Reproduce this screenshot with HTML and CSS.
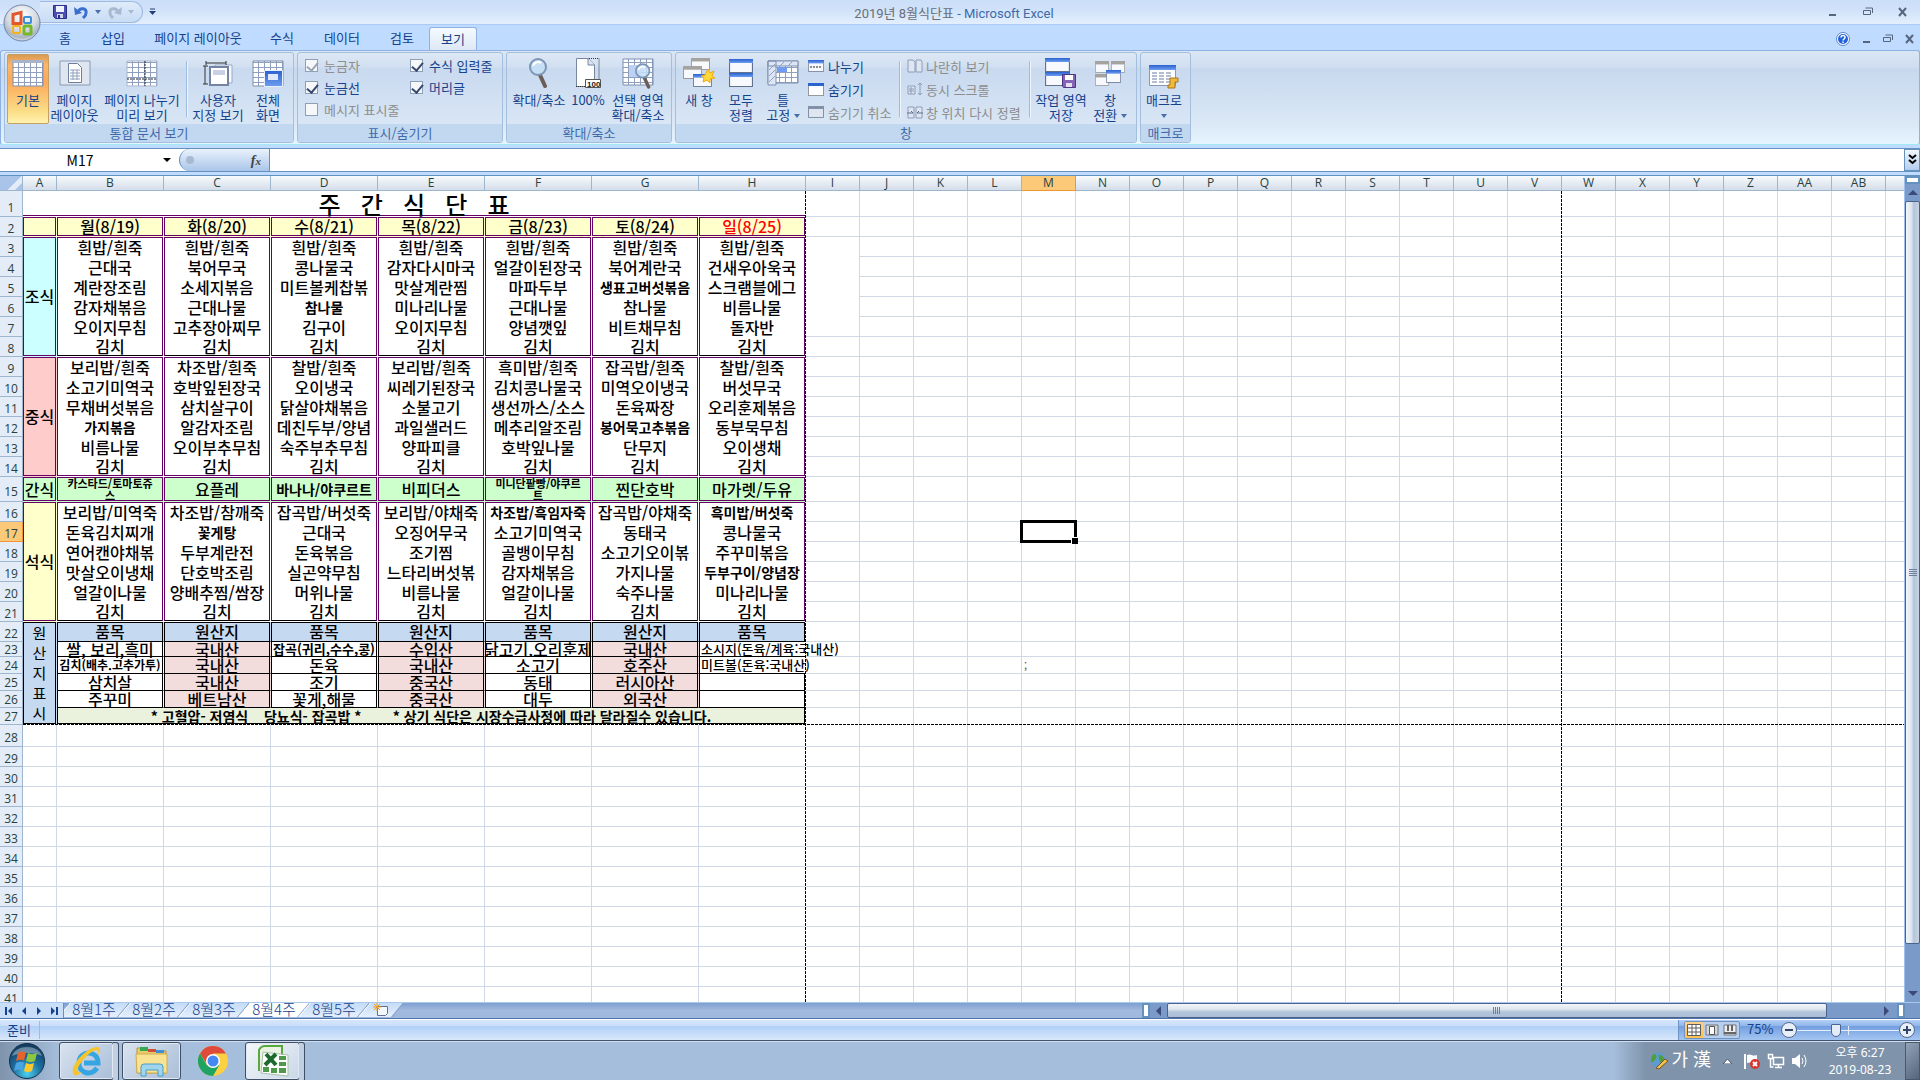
FILE: index.html
```html
<!DOCTYPE html>
<html lang="ko">
<head>
<meta charset="utf-8">
<title>2019년 8월식단표 - Microsoft Excel</title>
<link rel="stylesheet" href="styles.css">
</head>
<body>
<header class="titlebar">
  <button class="office" aria-label="Office 단추">
    <svg width="38" height="38" viewBox="0 0 38 38">
      <defs><radialGradient id="orb" cx=".5" cy=".3" r=".75"><stop offset="0" stop-color="#fff"/><stop offset=".55" stop-color="#d5dae2"/><stop offset=".8" stop-color="#a9b4c4"/><stop offset="1" stop-color="#f4f7fa"/></radialGradient></defs>
      <circle cx="19" cy="19" r="18" fill="url(#orb)" stroke="#6f86a6"/>
      <g fill="none" stroke-width="3">
        <path d="M18 8.500l-8 2v9h8z" stroke="#e4572a"/>
        <rect x="21" y="13" width="7" height="6" rx="1" stroke="#3d8fd6" stroke-width="2"/>
        <rect x="10" y="22" width="7" height="7" rx="1" stroke="#f5b31a" stroke-width="2"/>
        <rect x="21" y="22" width="7" height="8" rx="1" stroke="#75b82a"/>
      </g>
    </svg>
  </button>
  <div class="side">
    <div class="qat">
      <button aria-label="저장"><svg width="14" height="14"><path d="M.5.5h13v13h-11l-2-2z" fill="#4b4fb0" stroke="#28308a"/><path d="M3 1h8v6H3z" fill="#eef3ff"/><path d="M4 9h6v4H4z" fill="#cfd6e8"/><path d="M5 10h2v3H5z" fill="#28308a"/></svg></button>
      <button aria-label="실행 취소"><svg width="15" height="14"><path d="M4 7C6 2 13 3 12 8c0 3-2 4-3 5" fill="none" stroke="#3a6fd0" stroke-width="3"/><path d="M0 2l1 8 7-2z" fill="#3a6fd0"/></svg></button>
      <i class="caret"></i>
      <button aria-label="다시 실행"><svg width="15" height="14"><path d="M11 7C9 2 2 3 3 8c0 3 2 4 3 5" fill="none" stroke="#a9b9d0" stroke-width="3"/><path d="M15 2l-1 8-7-2z" fill="#a9b9d0"/></svg></button>
      <i class="caret dim"></i>
    </div>
    <svg class="qatmore" width="7" height="8"><path d="M1 1h5" stroke="#223f74"/><path d="M0 3h7l-3.500 4z" fill="#223f74"/></svg>
  </div>
  <h1><span>2019년 8월식단표</span> - Microsoft Excel</h1>
  <div class="side wincontrols">
    <button aria-label="최소화"><svg width="10" height="10"><path d="M1 8h7" stroke="#56667e" stroke-width="2"/></svg></button>
    <button aria-label="이전 크기로"><svg width="10" height="10"><path d="M2.500 1h7v5" fill="none" stroke="#56667e"/><path d="M.5 3.500h7v4h-7z" fill="none" stroke="#56667e"/></svg></button>
    <button aria-label="닫기"><svg width="10" height="10"><path d="M1 1l7 8M8 1L1 9" stroke="#56667e" stroke-width="2"/></svg></button>
  </div>
</header>

<nav class="tabs">
  <a href="#" class="t1">홈</a><a href="#" class="t2">삽입</a><a href="#" class="t3">페이지 레이아웃</a><a href="#" class="t4">수식</a><a href="#" class="t5">데이터</a><a href="#" class="t4">검토</a><a href="#" class="on">보기</a>
  <div class="doccontrols">
    <button aria-label="도움말"><svg width="14" height="14"><circle cx="7" cy="7" r="6.500" fill="#fff" stroke="#5b86c9"/><circle cx="7" cy="7" r="5" fill="#2060d8"/><path d="M5 5.500c0-3 4.500-2.500 4 0C9 7 7 7 7 8.500M7 9.500v1.500" fill="none" stroke="#fff" stroke-width="1.500"/></svg></button>
    <button aria-label="창 최소화"><svg width="9" height="10"><path d="M1 8h7" stroke="#56667e" stroke-width="2"/></svg></button>
    <button aria-label="창 복원"><svg width="10" height="10"><path d="M2.500 1h7v5" fill="none" stroke="#56667e"/><path d="M.5 3.500h7v4h-7z" fill="none" stroke="#56667e"/></svg></button>
    <button aria-label="창 닫기"><svg width="10" height="10"><path d="M1 1l7 8M8 1L1 9" stroke="#56667e" stroke-width="2"/></svg></button>
  </div>
</nav>

<svg width="0" height="0" class="defs">
  <defs>
    <pattern id="gp" width="6" height="5" patternUnits="userSpaceOnUse"><path d="M0 0h6v5H0z" fill="#fff"/><path d="M0 .5h6M.5 0v5" stroke="#8f9fbd"/></pattern>
    <linearGradient id="bl" x2="0" y2="1"><stop offset="0" stop-color="#2a62cf"/><stop offset="1" stop-color="#6d9df0"/></linearGradient>
    <symbol id="win" viewBox="0 0 22 14" preserveAspectRatio="none"><path d="M.5.5h21v13H.5z" fill="#f7f9fd" stroke="#62718c"/><path d="M0 0h22v4H0z" fill="url(#bl)"/></symbol>
    <symbol id="gwin" viewBox="0 0 22 14" preserveAspectRatio="none"><path d="M.5.5h21v13H.5z" fill="#f7f9fd" stroke="#8b8b90"/><path d="M0 0h22v4H0z" fill="#a5a3a0"/></symbol>
    <symbol id="lens" viewBox="0 0 20 30"><path d="M11 17l5 11" stroke="#6b5e59" stroke-width="4" stroke-linecap="round"/><circle cx="9" cy="9" r="8" fill="#c3def6" fill-opacity=".85" stroke="#7c95b5" stroke-width="2"/><path d="M4 8c1-4 6-5 8-3" stroke="#fff" stroke-width="2" fill="none"/></symbol>
  </defs>
</svg>

<section class="ribbon">
  <div class="group g1">
    <div class="body">
      <button class="big active w42"><svg width="32" height="32"><path d="M1 4h30v25H1z" fill="url(#gp)" stroke="#7f8fae"/><path d="M0 3h32v3H0z" fill="#a8b4cb"/></svg><span>기본</span></button>
      <button class="big w50"><svg width="32" height="32"><path d="M1 4h30v24H1z" fill="#dfe6f0" stroke="#8a9ab5"/><path d="M9.500 6.500h9l4 4v15h-13z" fill="#fff" stroke="#6e7f9d"/><path d="M11 13h10M11 16h10M11 19h10M11 22h10M14 13v10M18 13v10" stroke="#8f9fbd"/></svg><span>페이지<br>레이아웃</span></button>
      <button class="big w82"><svg width="32" height="32"><path d="M1 4h30v25H1z" fill="url(#gp)" stroke="#a9b5cc"/><path d="M19 4v25M1 22h30" stroke="#222" stroke-dasharray="2 1"/></svg><span>페이지 나누기<br>미리 보기</span></button>
      <i class="sep"></i>
      <button class="big w56"><svg width="32" height="32"><path d="M13 8h17v18H13z" fill="#f7f9fc" stroke="#9aa9c3"/><path d="M8 10h18v18H8z" fill="#fff" stroke="#7484a2" stroke-width="2"/><path d="M11 13h12v5H11z" fill="#c8d2e4"/><path d="M4 6h20M4 4v4M24 4v4M3 9v18M1 9h5M1 27h5" stroke="#333"/></svg><span>사용자<br>지정 보기</span></button>
      <button class="big w44"><svg width="32" height="32"><path d="M1 4h30v25H1z" fill="url(#gp)" stroke="#7f8fae"/><path d="M12.500 13.500h18v16h-18z" fill="url(#bl)" stroke="#e8effc"/><path d="M16 17h10v6H16z" fill="#dfe9fb"/></svg><span>전체<br>화면</span></button>
    </div>
    <h2>통합 문서 보기</h2>
  </div>
  <div class="group g2">
    <div class="body checks">
      <label class="off"><input type="checkbox" checked disabled>눈금자</label>
      <label><input type="checkbox" checked>수식 입력줄</label>
      <label><input type="checkbox" checked>눈금선</label>
      <label><input type="checkbox" checked>머리글</label>
      <label class="off"><input type="checkbox" disabled>메시지 표시줄</label>
    </div>
    <h2>표시/숨기기</h2>
  </div>
  <div class="group g3">
    <div class="body">
      <button class="big w56"><svg width="32" height="32"><use href="#lens" x="6" y="1" width="20" height="30"/></svg><span>확대/축소</span></button>
      <button class="big w42"><svg width="32" height="32"><path d="M4.500 1.500h12l6 6v22h-18z" fill="#fff" stroke="#7686a3"/><path d="M16 1v7h7" fill="#dbe3ef" stroke="#7686a3"/><path d="M17 1.500h10v28H4" fill="none" stroke="#333" stroke-dasharray="1 1"/><path d="M13.500 22.500h15v8h-15z" fill="#fff" stroke="#555"/><text x="15" y="30" font-size="8" font-weight="700" fill="#222">100</text></svg><span>100%</span></button>
      <button class="big w58"><svg width="32" height="32"><path d="M1 2h30v26H1z" fill="url(#gp)" stroke="#7f8fae"/><path d="M7 8h12v12H7z" fill="#bcd2f5"/><use href="#lens" x="13" y="6" width="17" height="26"/></svg><span>선택 영역<br>확대/축소</span></button>
    </div>
    <h2>확대/축소</h2>
  </div>
  <div class="group g4">
    <div class="body">
      <button class="big w42"><svg width="32" height="32"><use href="#gwin" x="8" y="1" width="19" height="12"/><use href="#gwin" x="0" y="9" width="19" height="13"/><use href="#win" x="10" y="17" width="19" height="13"/><path d="M25 12l2 4 4-2-2 5 3 2-5 1 0 4-3-3-4 2 1-4-3-2 4-1z" fill="#ffd83a" stroke="#f0a910"/></svg><span>새 창</span></button>
      <button class="big w42"><svg width="32" height="32"><use href="#win" x="4" y="2" width="24" height="14"/><use href="#win" x="4" y="16" width="24" height="14"/></svg><span>모두<br>정렬</span></button>
      <button class="big w42"><svg width="32" height="32"><path d="M1 4h30v22H1z" fill="url(#gp)" stroke="#7f8fae"/><path d="M1 4h8v24H1zM1 4h30v5H1z" fill="#dce6f6" stroke="#7f8fae"/><path d="M10 10h10v5H10z" fill="#6f9cf0"/><path d="M2 13l6-6M2 19l6-6M2 25l6-6M13 9l4-4M21 9l4-4" stroke="#8f9fbd"/></svg><span>틀<br>고정 <i class="caret"></i></span></button>
      <div class="stack w90">
        <button><svg width="16" height="16"><use href="#win" x="0" y="2" width="16" height="12"/><path d="M2 9h12" stroke="#222" stroke-dasharray="2 1"/></svg>나누기</button>
        <button><svg width="16" height="16"><path d="M.5 2.500h15v12H.5z" fill="#fff" stroke="#444" stroke-dasharray="1 1"/><path d="M0 2h16v3H0z" fill="#2a62cf"/></svg>숨기기</button>
        <button disabled><svg width="16" height="16"><path d="M.5 2.500h15v11H.5z" fill="#dfe6f2" stroke="#8290a8"/><path d="M0 2h16v3H0z" fill="#8290a8"/></svg>숨기기 취소</button>
      </div>
      <i class="sep"></i>
      <div class="stack w120">
        <button disabled><svg width="16" height="16"><path d="M1 2h5l2 2v10H1zM9 2h5l1 2v10H9z" fill="#dfe6f2" stroke="#8c9cb8"/></svg>나란히 보기</button>
        <button disabled><svg width="16" height="16"><path d="M1 5h7v8H1z" fill="#dfe6f2" stroke="#8c9cb8"/><path d="M2 8h5M2 10h5M4 6v7M13 2v12M11 4l2-2 2 2M11 12l2 2 2-2" stroke="#8c9cb8" fill="none"/></svg>동시 스크롤</button>
        <button disabled><svg width="16" height="16"><path d="M1 3h6v11H1zM9 3h6v11H9z" fill="#dfe6f2" stroke="#8c9cb8"/><path d="M0 9h6l-2-2M16 9h-6l2-2" stroke="#5f6f8c" fill="none"/></svg>창 위치 다시 정렬</button>
      </div>
      <i class="sep"></i>
      <button class="big w56"><svg width="32" height="32"><use href="#win" x="0" y="1" width="25" height="14"/><use href="#win" x="0" y="15" width="25" height="14"/><path d="M17.500 17.500h13v13h-12l-1-1z" fill="#8563b5" stroke="#4d3585"/><path d="M20 18h8v5h-8z" fill="#fff"/><path d="M21 26h6v4h-6z" fill="#e4e0ef"/></svg><span>작업 영역<br>저장</span></button>
      <button class="big w42"><svg width="32" height="32"><use href="#gwin" x="1" y="4" width="14" height="12"/><use href="#gwin" x="17" y="4" width="14" height="12"/><use href="#gwin" x="1" y="17" width="14" height="12"/><use href="#win" x="12" y="13" width="15" height="13"/></svg><span>창<br>전환 <i class="caret"></i></span></button>
    </div>
    <h2>창</h2>
  </div>
  <div class="group g5">
    <div class="body">
      <button class="big w42"><svg width="32" height="32"><path d="M1.500 8.500h26v20h-26z" fill="#fff" stroke="#8a9ab5"/><path d="M1 8h27v5H1z" fill="url(#bl)"/><path d="M4 16h20M4 19h20M4 22h20M4 25h20" stroke="#6b7f9f" stroke-dasharray="5 2"/><path d="M22 21h8v4h-3v6h-7v-3h2z" fill="#f0bb3c" stroke="#a8741a"/></svg><span>매크로<br><i class="caret"></i></span></button>
    </div>
    <h2>매크로</h2>
  </div>
</section>

<div class="formulabar">
  <input class="namebox" value="M17" aria-label="이름 상자">
  <i class="caret dark"></i>
  <div class="fx"><span></span><button aria-label="함수 삽입"><em>f<sub>x</sub></em></button></div>
  <input class="formula" value="" aria-label="수식 입력줄">
  <button class="expand" aria-label="수식 입력줄 확장"><svg width="9" height="12"><path d="M1 1l3.500 3L8 1M1 6l3.500 3L8 6" fill="none" stroke="#000" stroke-width="2"/></svg></button>
</div>

<main class="workbook">
  <div class="sheet">
    <table>
      <colgroup><col class="ch"><col class="ca"><col class="cm" span="7"><col class="cs" span="20"><col></colgroup>
      <thead><tr>
        <th class="corner"></th><th>A</th><th>B</th><th>C</th><th>D</th><th>E</th><th>F</th><th>G</th><th>H</th><th>I</th><th>J</th><th>K</th><th>L</th><th class="cur">M</th><th>N</th><th>O</th><th>P</th><th>Q</th><th>R</th><th>S</th><th>T</th><th>U</th><th>V</th><th>W</th><th>X</th><th>Y</th><th>Z</th><th>AA</th><th>AB</th><th></th>
      </tr></thead>
      <tbody>
      <tr class="r26"><th>1</th><td colspan="8" class="title">주   간   식   단   표</td><td colspan="21" class="rest"></td></tr>
      <tr class="days"><th>2</th><td></td><td>월(8/19)</td><td>화(8/20)</td><td>수(8/21)</td><td>목(8/22)</td><td>금(8/23)</td><td>토(8/24)</td><td class="sun">일(8/25)</td><td colspan="21" class="rest"></td></tr>

      <tr class="meal top"><th>3</th><td rowspan="6" class="kind cyan">조식</td><td>흰밥/흰죽</td><td>흰밥/흰죽</td><td>흰밥/흰죽</td><td>흰밥/흰죽</td><td>흰밥/흰죽</td><td>흰밥/흰죽</td><td>흰밥/흰죽</td><td rowspan="5" class="blank"></td><td colspan="20" class="rest"></td></tr>
      <tr class="meal"><th>4</th><td>근대국</td><td>북어무국</td><td>콩나물국</td><td>감자다시마국</td><td>얼갈이된장국</td><td>북어계란국</td><td>건새우아욱국</td><td colspan="20" class="rest"></td></tr>
      <tr class="meal"><th>5</th><td>계란장조림</td><td>소세지볶음</td><td>미트볼케찹볶</td><td>맛살계란찜</td><td>마파두부</td><td class="s14">생표고버섯볶음</td><td>스크램블에그</td><td colspan="20" class="rest"></td></tr>
      <tr class="meal"><th>6</th><td>감자채볶음</td><td>근대나물</td><td class="s14">참나물</td><td>미나리나물</td><td>근대나물</td><td>참나물</td><td>비름나물</td><td colspan="20" class="rest"></td></tr>
      <tr class="meal"><th>7</th><td>오이지무침</td><td>고추장아찌무</td><td>김구이</td><td>오이지무침</td><td>양념깻잎</td><td>비트채무침</td><td>돌자반</td><td colspan="20" class="rest"></td></tr>
      <tr class="meal end"><th>8</th><td>김치</td><td>김치</td><td>김치</td><td>김치</td><td>김치</td><td>김치</td><td>김치</td><td colspan="21" class="rest"></td></tr>

      <tr class="meal top"><th>9</th><td rowspan="6" class="kind pink">중식</td><td>보리밥/흰죽</td><td>차조밥/흰죽</td><td>찰밥/흰죽</td><td>보리밥/흰죽</td><td>흑미밥/흰죽</td><td>잡곡밥/흰죽</td><td>찰밥/흰죽</td><td colspan="21" class="rest"></td></tr>
      <tr class="meal"><th>10</th><td>소고기미역국</td><td>호박잎된장국</td><td>오이냉국</td><td>씨레기된장국</td><td>김치콩나물국</td><td>미역오이냉국</td><td>버섯무국</td><td colspan="21" class="rest"></td></tr>
      <tr class="meal"><th>11</th><td>무채버섯볶음</td><td>삼치살구이</td><td>닭살야채볶음</td><td>소불고기</td><td>생선까스/소스</td><td>돈육짜장</td><td>오리훈제볶음</td><td colspan="21" class="rest"></td></tr>
      <tr class="meal"><th>12</th><td class="s14">가지볶음</td><td>알감자조림</td><td>데친두부/양념</td><td>과일샐러드</td><td>메추리알조림</td><td class="s14">봉어묵고추볶음</td><td>동부묵무침</td><td colspan="21" class="rest"></td></tr>
      <tr class="meal"><th>13</th><td>비름나물</td><td>오이부추무침</td><td>숙주부추무침</td><td>양파피클</td><td>호박잎나물</td><td>단무지</td><td>오이생채</td><td colspan="21" class="rest"></td></tr>
      <tr class="meal endp"><th>14</th><td>김치</td><td>김치</td><td>김치</td><td>김치</td><td>김치</td><td>김치</td><td>김치</td><td colspan="21" class="rest"></td></tr>

      <tr class="snack"><th>15</th><td>간식</td><td class="s11">카스타드/토마토쥬<br>스</td><td>요플레</td><td class="s14">바나나/야쿠르트</td><td>비피더스</td><td class="s11">미니단팥빵/야쿠르<br>트</td><td>찐단호박</td><td>마가렛/두유</td><td colspan="21" class="rest"></td></tr>

      <tr class="meal top"><th>16</th><td rowspan="6" class="kind cream">석식</td><td>보리밥/미역죽</td><td>차조밥/참깨죽</td><td>잡곡밥/버섯죽</td><td>보리밥/야채죽</td><td class="s14">차조밥/흑임자죽</td><td>잡곡밥/야채죽</td><td class="s14">흑미밥/버섯죽</td><td colspan="21" class="rest"></td></tr>
      <tr class="meal"><th class="cur">17</th><td>돈육김치찌개</td><td class="s14">꽃게탕</td><td>근대국</td><td>오징어무국</td><td>소고기미역국</td><td>동태국</td><td>콩나물국</td><td colspan="4" class="rest"></td><td class="selected"><span></span></td><td colspan="16" class="rest"></td></tr>
      <tr class="meal"><th>18</th><td>연어캔야채볶</td><td>두부계란전</td><td>돈육볶음</td><td>조기찜</td><td>골뱅이무침</td><td>소고기오이볶</td><td>주꾸미볶음</td><td colspan="21" class="rest"></td></tr>
      <tr class="meal"><th>19</th><td>맛살오이냉채</td><td>단호박조림</td><td>실곤약무침</td><td>느타리버섯볶</td><td>감자채볶음</td><td>가지나물</td><td class="s14">두부구이/양념장</td><td colspan="21" class="rest"></td></tr>
      <tr class="meal"><th>20</th><td>얼갈이나물</td><td>양배추찜/쌈장</td><td>머위나물</td><td>비름나물</td><td>얼갈이나물</td><td>숙주나물</td><td>미나리나물</td><td colspan="21" class="rest"></td></tr>
      <tr class="meal end"><th>21</th><td>김치</td><td>김치</td><td>김치</td><td>김치</td><td>김치</td><td>김치</td><td>김치</td><td colspan="21" class="rest"></td></tr>

      <tr class="origin head"><th>22</th><td rowspan="6" class="kind vertical">원<br>산<br>지<br>표<br>시</td><td>품목</td><td>원산지</td><td>품목</td><td>원산지</td><td>품목</td><td>원산지</td><td>품목</td><td colspan="21" class="rest"></td></tr>
      <tr class="origin r15"><th>23</th><td>쌀, 보리,흑미</td><td class="place">국내산</td><td class="s13">잡곡(귀리,수수,콩)</td><td class="place">수입산</td><td><span class="clip">닭고기,오리훈제</span></td><td class="place">국내산</td><td class="spill">소시지(돈육/계육:국내산)</td><td colspan="21" class="rest"></td></tr>
      <tr class="origin r17"><th>24</th><td class="s12">김치(배추.고추가투)</td><td class="place">국내산</td><td>돈육</td><td class="place">국내산</td><td>소고기</td><td class="place">호주산</td><td class="spill">미트볼(돈육:국내산)</td><td colspan="4" class="rest"></td><td class="rest note">;</td><td colspan="16" class="rest"></td></tr>
      <tr class="origin r17"><th>25</th><td>삼치살</td><td class="place">국내산</td><td>조기</td><td class="place">중국산</td><td>동태</td><td class="place">러시아산</td><td></td><td colspan="21" class="rest"></td></tr>
      <tr class="origin r17"><th>26</th><td>주꾸미</td><td class="place">베트남산</td><td>꽃게,해물</td><td class="place">중국산</td><td>대두</td><td class="place">외국산</td><td></td><td colspan="21" class="rest"></td></tr>
      <tr class="origin r17 foot"><th>27</th><td colspan="7" class="s14">* 고혈압- 저염식    당뇨식- 잡곡밥 *        * 상기 식단은 시장수급사정에 따라 달라질수 있습니다.</td><td colspan="21" class="rest"></td></tr>

      <tr class="r22"><th>28</th><td></td><td></td><td></td><td></td><td></td><td></td><td></td><td></td><td colspan="21" class="rest"></td></tr>
      <tr><th>29</th><td></td><td></td><td></td><td></td><td></td><td></td><td></td><td></td><td colspan="21" class="rest"></td></tr>
      <tr><th>30</th><td></td><td></td><td></td><td></td><td></td><td></td><td></td><td></td><td colspan="21" class="rest"></td></tr>
      <tr><th>31</th><td></td><td></td><td></td><td></td><td></td><td></td><td></td><td></td><td colspan="21" class="rest"></td></tr>
      <tr><th>32</th><td></td><td></td><td></td><td></td><td></td><td></td><td></td><td></td><td colspan="21" class="rest"></td></tr>
      <tr><th>33</th><td></td><td></td><td></td><td></td><td></td><td></td><td></td><td></td><td colspan="21" class="rest"></td></tr>
      <tr><th>34</th><td></td><td></td><td></td><td></td><td></td><td></td><td></td><td></td><td colspan="21" class="rest"></td></tr>
      <tr><th>35</th><td></td><td></td><td></td><td></td><td></td><td></td><td></td><td></td><td colspan="21" class="rest"></td></tr>
      <tr><th>36</th><td></td><td></td><td></td><td></td><td></td><td></td><td></td><td></td><td colspan="21" class="rest"></td></tr>
      <tr><th>37</th><td></td><td></td><td></td><td></td><td></td><td></td><td></td><td></td><td colspan="21" class="rest"></td></tr>
      <tr><th>38</th><td></td><td></td><td></td><td></td><td></td><td></td><td></td><td></td><td colspan="21" class="rest"></td></tr>
      <tr><th>39</th><td></td><td></td><td></td><td></td><td></td><td></td><td></td><td></td><td colspan="21" class="rest"></td></tr>
      <tr><th>40</th><td></td><td></td><td></td><td></td><td></td><td></td><td></td><td></td><td colspan="21" class="rest"></td></tr>
      <tr><th>41</th><td></td><td></td><td></td><td></td><td></td><td></td><td></td><td></td><td colspan="21" class="rest"></td></tr>
      </tbody>
    </table>
    <i class="pagebreak v first"></i><i class="pagebreak v second"></i><i class="pagebreak h"></i>
  </div>
  <div class="vscroll">
    <i class="split"></i>
    <button aria-label="위로"><svg width="10" height="5"><path d="M0 5l5-5 5 5z" fill="#3c4a78"/></svg></button>
    <div class="thumb"><i></i></div>
    <button class="down" aria-label="아래로"><svg width="10" height="5"><path d="M0 0l5 5 5-5z" fill="#3c4a78"/></svg></button>
  </div>
</main>

<div class="sheetbar">
  <div class="navs">
    <button aria-label="첫 시트"><svg width="8" height="8"><path d="M1 0v8" stroke="#15428b" stroke-width="2"/><path d="M7 0v8L3 4z" fill="#15428b"/></svg></button>
    <button aria-label="이전 시트"><svg width="8" height="8"><path d="M6 0v8L2 4z" fill="#15428b"/></svg></button>
    <button aria-label="다음 시트"><svg width="8" height="8"><path d="M2 0v8l4-4z" fill="#15428b"/></svg></button>
    <button aria-label="마지막 시트"><svg width="8" height="8"><path d="M7 0v8" stroke="#15428b" stroke-width="2"/><path d="M1 0v8l4-4z" fill="#15428b"/></svg></button>
  </div>
  <a href="#">8월1주</a><a href="#">8월2주</a><a href="#">8월3주</a><a href="#" class="on">8월4주</a><a href="#">8월5주</a>
  <a href="#" class="new" aria-label="워크시트 삽입"><svg width="16" height="13"><path d="M4.500 3.500h10v7l-2 2h-8z" fill="#f4f7fc" stroke="#5f7191"/><path d="M4 0v8M0 4h8M1 1l6 6M7 1L1 7" stroke="#f19b1c"/></svg></a>
  <div class="hscroll">
    <i class="split"></i>
    <button aria-label="왼쪽"><svg width="5" height="10"><path d="M5 0v10L0 5z" fill="#3c4a78"/></svg></button>
    <div class="thumb"><i></i></div>
    <button class="right" aria-label="오른쪽"><svg width="5" height="10"><path d="M0 0v10l5-5z" fill="#3c4a78"/></svg></button>
    <i class="split"></i>
  </div>
</div>

<footer class="status">
  <span class="ready">준비</span>
  <div class="zoom">
    <div class="views">
      <button class="on" aria-label="기본"><svg width="14" height="12"><path d="M.5.5h13v11H.5zM.5 4h13M.5 8h13M5 0v12M9 0v12" fill="#fff" stroke="#5d5d5d"/></svg></button>
      <button aria-label="페이지 레이아웃"><svg width="14" height="12"><path d="M1 1h12v10H1z" fill="#d6d6d6" stroke="#6f7480"/><path d="M4.500 2.500h5v8h-5z" fill="#fff" stroke="#555"/></svg></button>
      <button aria-label="페이지 나누기 미리 보기"><svg width="14" height="12"><path d="M1 1h12v10H1z" fill="#eee" stroke="#6f7480"/><path d="M5 1v6M9 1v6M1 9h12" stroke="#666" stroke-width="2"/></svg></button>
    </div>
    <label for="zoom">75%</label>
    <button class="round" aria-label="축소"><svg width="16" height="16"><circle cx="8" cy="8" r="7.500" fill="#e9eff8" stroke="#52698f"/><path d="M4 8h8" stroke="#33466b" stroke-width="2"/></svg></button>
    <input id="zoom" type="range" min="0" max="100" value="37">
    <button class="round" aria-label="확대"><svg width="16" height="16"><circle cx="8" cy="8" r="7.500" fill="#e9eff8" stroke="#52698f"/><path d="M4 8h8M8 4v8" stroke="#33466b" stroke-width="2"/></svg></button>
  </div>
</footer>

<div class="taskbar">
  <button class="start" aria-label="시작">
    <svg width="38" height="38"><defs><radialGradient id="st" cx=".5" cy=".85" r=".8"><stop offset="0" stop-color="#4fd0f0"/><stop offset=".5" stop-color="#1c6f9f"/><stop offset="1" stop-color="#143d5f"/></radialGradient></defs><circle cx="19" cy="19" r="17.500" fill="url(#st)" stroke="#12304c"/><path d="M4 14C8 2 30 2 34 14c-8-4-22-4-30 0z" fill="#fff" opacity=".35"/><path d="M10 11c3-2 5-2 8-.5l-2 8c-3-1-5-1-8 .5z" fill="#e8622c"/><path d="M20 11c3 1.500 5 1.500 9 0l-2 8c-3 1.500-6 1-9 0z" fill="#8fc640"/><path d="M8 21c3-1.500 5-1.500 8-.5l-2 8c-3-1.500-5-1-8 .5z" fill="#4ba4e4"/><path d="M18 21c3 1.500 5 1.500 8 0l-2 8c-3 1.500-5 1.500-8 0z" fill="#fbc92c"/></svg>
  </button>
  <button class="task multi ie" aria-label="Internet Explorer"><svg width="34" height="34"><path d="M27 24c-6 9-19 5-18-6 1-12 19-12 19 1H14" fill="none" stroke="#35a6e2" stroke-width="5"/><path d="M4 31C-2 25 14 4 27 3c4 0 4 4 1 8 2-9-6-4-12 2C8 21 4 30 12 28c-4 3-6 4-8 3z" fill="#f6c52d"/></svg></button>
  <button class="task ex" aria-label="Windows 탐색기"><svg width="34" height="32"><path d="M2 3h9l2 3h18v22H2z" fill="#e9cb6b" stroke="#b9953a"/><path d="M5 2h8v4H5z" fill="#35a852"/><path d="M13 4h8v3h-8z" fill="#d24c3a"/><path d="M21 5h8v3h-8z" fill="#3b8fd8"/><path d="M1 9h31v19H2z" fill="#f8e293" stroke="#cfac50"/><path d="M6 31v-9q0-3 3-3h16q3 0 3 3v9h-5v-6H11v6z" fill="#9fd6ee" stroke="#4b9cc4"/></svg></button>
  <button class="task plain" aria-label="Chrome"><svg width="30" height="30" viewBox="0 0 30 30"><circle cx="15" cy="15" r="15" fill="#fbd043"/><path d="M2 7.500A15 15 0 0 1 28 7.500H15L9 18.500z" fill="#de4b3b"/><path d="M2 7.500A15 15 0 0 0 15 30l6.500-11.200h-13z" fill="#1ea362"/><circle cx="15" cy="15" r="7" fill="#fff"/><circle cx="15" cy="15" r="5.500" fill="#4587f3"/></svg></button>
  <button class="task multi xl" aria-label="Excel"><svg width="34" height="34"><path d="M3 27V6q2-4 6-4h17v10" fill="#e9f3e4" stroke="#58a83c" stroke-width="2"/><path d="M7 8l25 3v21l-27-3z" fill="#fff" stroke="#a8bfa4"/><path d="M23 12h7v4h-7zM23 18h7v4h-7zM23 24h7v5h-7zM15 24h6v5h-6zM7 23h6v5H7z" fill="#4f9a4a"/><path d="M10 10l10 11M20 10L9 21" stroke="#1d6b2c" stroke-width="4"/></svg></button>
  <div class="tray">
    <svg width="18" height="18"><circle cx="8" cy="8" r="7.500" fill="#5b9bd2"/><path d="M2 4c4-5 6 1 3 4S2 11 1 8zM9 3c5 0 6 4 4 7S8 7 9 3z" fill="#4f9e3c"/><path d="M6 16l9-9 3 2-9 8z" fill="#f3c24a" stroke="#7a5320"/></svg>
    <span class="ime">가 漢</span>
    <svg class="up" width="9" height="6"><path d="M0 6l4.500-5L9 6z" fill="#fff" stroke="#4b5a70"/></svg>
    <svg width="18" height="18"><path d="M2 2v15" stroke="#fff" stroke-width="2"/><path d="M4 3c4-2 5 2 10 0v8c-5 2-6-2-10 0z" fill="#fff"/><circle cx="12" cy="12" r="5" fill="#d8342c"/><path d="M10 10l4 4M14 10l-4 4" stroke="#fff" stroke-width="2"/></svg>
    <svg width="18" height="18"><path d="M6.500 5.500h10v7h-10zM8 15.500h7M11.500 13v2M1.500 2.500h4v4h-4zM3.500 7v8h3" fill="none" stroke="#fff" stroke-width="1.500"/></svg>
    <svg width="16" height="18"><path d="M1 6h3l5-4v14l-5-4H1z" fill="#fff"/><path d="M11 6q2 3 0 6M13 3q4 6 0 12" fill="none" stroke="#fff"/></svg>
    <div class="clock">오후 6:27<br>2019-08-23</div>
    <button class="desk" aria-label="바탕 화면 보기"></button>
  </div>
</div>
</body>
</html>
```
FILE: styles.css
```css
* { box-sizing: border-box; }
body {
  margin: 0;
  height: 100vh;
  display: flex;
  flex-direction: column;
  overflow: hidden;
  background: #bfdbff;
  color: #15428b;
  font: 13px/15px "Noto Sans CJK KR", sans-serif;
}
button { border: 0; padding: 0; background: none; font: inherit; color: inherit; }
a { color: inherit; text-decoration: none; }
input { font: inherit; color: #000; border: 0; padding: 0; margin: 0; background: none; }
h1, h2 { margin: 0; font-weight: 400; font-size: 13px; }
.defs { display: block; height: 0; flex: none; }

.caret { display: inline-block; border: 3px solid transparent; border-top: 4px solid #4a6ea8; border-bottom: 0; vertical-align: 2px; }
.caret.dim { border-top-color: #a9b9d0; }
.caret.dark { border-width: 4px; border-bottom: 0; border-top-color: #000; }

/* title bar */
.titlebar {
  position: relative;
  height: 25px;
  flex: none;
  display: flex;
  align-items: center;
  background: linear-gradient(#cbdff8, #cfe1f9 35%, #e3effd);
  border-bottom: 1px solid #a9cbf5;
}
.side { flex: 1; display: flex; align-items: center; padding-left: 40px; }
.office { position: absolute; left: 3px; top: 4px; width: 38px; height: 38px; z-index: 2; }
.office svg { display: block; }
.qat { display: flex; align-items: center; gap: 6px; width: 103px; height: 22px; padding-left: 13px; border: 1px solid #9dbbe3; border-left: 0; border-radius: 0 11px 11px 0; background: linear-gradient(#dfebfa, #c8dcf5); }
.qat button { display: flex; width: 15px; }
.qatmore { margin-left: 6px; }
.titlebar h1 { color: #3e6aaa; padding-top: 2px; font-family: Roboto, "Noto Sans CJK KR", sans-serif; }
.titlebar h1 span { color: #696e78; }
.wincontrols { gap: 25px; padding-right: 12px; justify-content: flex-end; }
.wincontrols button { display: flex; }

/* ribbon tabs */
.tabs { height: 25px; flex: none; display: flex; align-items: flex-end; padding-left: 42px; }
.tabs > a { height: 23px; line-height: 22px; text-align: center; }
.t1 { width: 46px; }
.t2 { width: 50px; }
.t3 { width: 120px; }
.t4 { width: 48px; }
.t5 { width: 72px; }
.tabs .on { width: 48px; margin-left: 3px; border: 1px solid #8db2e3; border-bottom: 0; border-radius: 3px 3px 0 0; background: linear-gradient(#f5faff, #dde8f5); line-height: 21px; }
.doccontrols { display: flex; align-items: center; gap: 12px; height: 23px; margin-left: auto; padding-right: 5px; }
.doccontrols button { display: flex; }

/* ribbon */
.ribbon {
  height: 95px;
  flex: none;
  display: flex;
  gap: 3px;
  padding: 1px 3px 2px;
  border: 1px solid #8db2e3;
  border-bottom-color: #9fe8f4;
  border-radius: 3px;
  background: linear-gradient(#dae6f4, #cfddef 18%, #c7d8ee 19%, #dbe9f6 80%, #e5f5fe);
}
.group { height: 91px; flex: none; display: flex; flex-direction: column; border: 1px solid #a3bfdd; border-radius: 3px; background: linear-gradient(#dde8f5, #d1dff0 16%, #c9d9ef 17%, #d8e6f5 80%); }
.group h2 { height: 18px; line-height: 17px; text-align: center; color: #3e6aaa; background: #c1d8f0; border-radius: 0 0 3px 3px; }
.body { flex: 1; display: flex; padding: 1px 2px 0; }
.g1 { width: 290px; }
.g2 { width: 206px; }
.g3 { width: 166px; }
.g3 .body { padding-left: 4px; }
.g4 { width: 462px; }
.g5 { width: 51px; }
.big { height: 70px; padding-top: 3px; flex: none; white-space: nowrap; text-align: center; display: flex; flex-direction: column; align-items: center; justify-content: flex-start; gap: 3px; }
.big svg { flex: none; font-family: "Liberation Sans", sans-serif; }
.active { border: 1px solid #c6a063; border-radius: 2px; padding-top: 2px; background: linear-gradient(#d99a52, #fbb76a 15%, #fca95a 40%, #fbe08a 85%, #fff3b0); }
.w42 { width: 42px; }
.w44 { width: 44px; }
.w50 { width: 51px; }
.w56 { width: 56px; }
.w58 { width: 58px; }
.w82 { width: 84px; }
.w90 { width: 93px; }
.w120 { width: 124px; }
.sep { width: 2px; height: 56px; margin: 7px 2px 0; flex: none; border-left: 1px solid #9dbbdd; border-right: 1px solid #eef5fc; }
.checks { display: grid; grid-template-columns: 105px 1fr; grid-template-rows: repeat(3, 22px); padding: 1px 7px 0; }
.checks label { display: flex; align-items: center; gap: 6px; white-space: nowrap; }
.checks .off { color: #8d8d8d; }
.checks input { appearance: none; width: 13px; height: 13px; border: 1px solid #8e9fb8; background: #f6f7f9; position: relative; }
.checks input:checked::after { content: ""; position: absolute; left: 3px; top: 0; width: 5px; height: 9px; border: solid #33486e; border-width: 0 2px 2px 0; transform: rotate(40deg); }
.checks input:disabled:checked::after { border-color: #9aa4b5; }
.stack { display: flex; flex-direction: column; gap: 7px; padding: 4px 0 0 4px; }
.stack button { display: flex; gap: 4px; height: 16px; align-items: center; white-space: nowrap; }
.stack button:disabled { color: #8d8d8d; }
.stack.w120 button { gap: 3px; }

/* formula bar */
.formulabar { height: 24px; flex: none; display: flex; align-items: center; margin: 3px 0 3px; border: solid #6591bf; border-width: 1px 0; background: #fff; }
.namebox { width: 160px; height: 20px; text-align: center; font-size: 14px; }
.formulabar .caret { margin: 0 8px 0 3px; }
.fx { width: 91px; height: 22px; display: flex; align-items: center; justify-content: space-between; padding: 0 8px 0 6px; border: 1px solid #6591bf; border-width: 0 1px 0 1px; border-radius: 12px 0 0 12px; background: linear-gradient(#eaf2fc, #a9c5e9); }
.fx span { width: 8px; height: 8px; border-radius: 4px; background: #a8b9d2; }
.fx em { font: italic 700 14px/16px "Liberation Serif", serif; color: #444; }
.fx sub { font-size: 11px; line-height: 11px; vertical-align: baseline; }
.formula { flex: 1; height: 22px; min-width: 0; }
.expand { width: 16px; height: 22px; border: 1px solid #6591bf; background: linear-gradient(#f2f7fd, #b4cdee); }

/* worksheet */
.workbook { flex: 1; min-height: 0; display: flex; border-top: 1px solid #6591bf; }
.sheet { flex: 1; min-width: 0; position: relative; overflow: hidden; background: #fff; }
table { width: 100%; table-layout: fixed; border-collapse: separate; border-spacing: 0; color: #000; }
.ch { width: 23px; }
.ca { width: 34px; }
.cm { width: 107px; }
.cs { width: 54px; }
th { padding: 0; font: 400 12px/14px "Open Sans", sans-serif; color: #27413e; border: solid #9eb6ce; border-width: 0 1px 1px 0; background: #e4ecf7; vertical-align: bottom; }
thead th { height: 15px; line-height: 14px; background: linear-gradient(#f8fbfd, #d5dde9); }
thead th:last-child { border-right: 0; }
thead .corner { background: linear-gradient(135deg, #a9c4e9 60%, #e4ecf7 61%, #e4ecf7 80%, #a9c4e9 81%); }
th.cur { background: #fbc977; border-color: #f29536; }
td {
  --v: transparent; --t: transparent; --b: transparent;
  padding: 0;
  text-align: center;
  white-space: nowrap;
  font-size: 16px;
  font-weight: 500;
  line-height: 19px;
  border: solid #d0d7e5;
  border-width: 0 1px 1px 0;
  box-shadow: inset 1px 0 var(--v), inset -1px 0 var(--v), inset 0 1px var(--t), inset 0 -1px var(--b);
}
tbody tr { height: 20px; }
.r26 { height: 26px; }
.r15 { height: 15px; }
.r17 { height: 17px; }
.r22 { height: 22px; }
.r26 th, .r22 th { line-height: 17px; }
.r15 td { line-height: 14px; }
.r15 th { line-height: 12px; }
.r17 td { line-height: 16px; }
.s14 { font-size: 14px; font-weight: 700; }
.s13 { font-size: 13px; font-weight: 700; }
.s12 { font-size: 12px; font-weight: 700; }
.s11 { font-size: 11px; font-weight: 700; }
tbody .title { white-space: pre; font-size: 24px; line-height: 25px; border-color: transparent; --b: #660066; }
.days td, .meal td, .snack td { border-color: transparent; --v: #660066; }
.meal td { border-bottom-width: 0; }
.meal.end td, .meal.endp td, .meal .kind { border-bottom-width: 1px; }
.days td { background: #ffffcc; --t: #660066; --b: #660066; }
.days .sun { color: #f00; }
.top td { --t: #660066; }
.end td { --b: #000; }
.endp td { --b: #660066; }
.meal .kind { --t: #660066; --b: #660066; }
.cyan { background: #ccffff; }
.pink { background: #ffcccc; }
.cream { background: #ffffcc; }
.snack { height: 25px; }
.snack th { line-height: 18px; }
.snack td { background: #ccffcc; --t: #660066; --b: #660066; }
.snack .s11 { line-height: 12px; }
.origin td { border-color: transparent; border-bottom-color: #000; --v: #000; }
.head td { background: #c5d9f1; --t: #000; }
.origin .vertical { font-size: 15px; font-weight: 400; line-height: 20px; --b: #000; border-bottom-color: transparent; }
.origin .place { background: #f2dddc; }
.origin .spill { font-size: 13px; text-align: left; padding-left: 2px; box-shadow: inset 1px 0 #000; }
.foot td { background: #eaf1dd; white-space: pre; --b: #000; }
.clip { display: flex; justify-content: center; overflow: hidden; height: 14px; margin: 0 1px; }
tbody tr .blank { --v: transparent; --t: transparent; --b: transparent; border-color: #d0d7e5; border-bottom-width: 1px; }
tbody tr .rest, tbody .meal .rest {
  --v: transparent; --t: transparent; --b: transparent;
  border-width: 0 0 1px;
  border-color: #d0d7e5;
  background: repeating-linear-gradient(to right, transparent 0 53px, #d0d7e5 53px 54px);
}
tbody tr .note { font-size: 11px; font-weight: 400; text-align: left; padding-left: 2px; color: #555; }
tbody tr .selected { --v: transparent; position: relative; border-color: #d0d7e5; border-bottom-width: 1px; }
.selected span { position: absolute; inset: -2px; border: 3px solid #000; }
.selected span::after { content: ""; position: absolute; right: -4px; bottom: -4px; width: 6px; height: 6px; background: #000; border: solid #fff; border-width: 1px 0 0 1px; }
.pagebreak { position: absolute; }
.pagebreak.v { top: 15px; bottom: 0; width: 1px; background: repeating-linear-gradient(#000 0 3px, #fff 3px 4px); }
.pagebreak.first { left: 805px; }
.pagebreak.second { left: 1561px; }
.pagebreak.h { left: 23px; right: 0; top: 548px; height: 1px; background: repeating-linear-gradient(to right, #000 0 3px, #fff 3px 4px); }

/* scroll bars */
.vscroll { width: 16px; flex: none; display: flex; flex-direction: column; background: #7a9bc9; border-left: 1px solid #9dc0ee; }
.split { flex: none; background: #fff; border: 2px solid #6591bf; }
.vscroll .split { height: 8px; }
.vscroll button { height: 17px; flex: none; display: flex; align-items: center; justify-content: center; }
.thumb { display: flex; align-items: center; justify-content: center; border: 1px solid #4b628d; border-radius: 2px; }
.vscroll .thumb { flex: 744 1 0; background: linear-gradient(to right, #f3f5f9, #dfe6ef 40%, #b4c5da 60%, #c6d3e4); }
.vscroll .thumb i { width: 8px; height: 8px; background: repeating-linear-gradient(#6f7f99 0 1px, transparent 1px 2px); }
.vscroll .down { flex: none; height: 58px; align-items: flex-end; padding-bottom: 6px; }

.sheetbar { height: 17px; flex: none; display: flex; background: linear-gradient(#7d9fd0, #a3b9de 50%, #9fb8de); border-top: 1px solid #a9c8ee; border-bottom: 1px solid #4f74ab; overflow: hidden; }
.navs { position: relative; z-index: 1; width: 64px; padding: 0 5px; display: flex; justify-content: space-between; align-items: center; background: #c9def8; border-right: 1px solid #6591bf; }
.navs button { display: flex; }
.sheetbar > a { width: 60px; position: relative; z-index: 0; text-align: center; font-size: 15px; font-weight: 300; line-height: 12px; color: #15428b; }
.sheetbar > a::before { content: ""; position: absolute; inset: 0 0 1px; z-index: -1; background: linear-gradient(#c4dbf8, #e4effc); border-right: 1px solid #7f9cc8; box-shadow: inset 1px 0 #fff; transform: skewX(-40deg); }
.sheetbar > .on::before { background: #fff; }
.sheetbar > .new { width: 34px; }
.sheetbar > .new svg { display: block; margin: 0 auto; }
.hscroll { width: 778px; margin-left: auto; display: flex; background: #7a9bc9; }
.hscroll .split { width: 8px; }
.hscroll button { width: 17px; display: flex; align-items: center; justify-content: center; }
.hscroll .thumb { flex: 660 1 0; background: linear-gradient(#f3f5f9, #dfe6ef 40%, #b4c5da 60%, #a9bed6); }
.hscroll .thumb i { width: 8px; height: 7px; background: repeating-linear-gradient(to right, #6f7f99 0 1px, transparent 1px 2px); }
.hscroll .right { flex: none; width: 70px; justify-content: flex-end; padding-right: 8px; }
.hscroll .split:last-child { margin-right: 15px; }

/* status bar */
.status { height: 22px; flex: none; display: flex; justify-content: space-between; align-items: center; border-top: 1px solid #fff; border-bottom: 1px solid #3f5372; background: linear-gradient(#d6e6fb, #cadff9 28%, #afcff6 30%, #d9e8fa); }
.ready { width: 40px; line-height: 18px; padding-left: 7px; border-right: 1px solid #9dbbe3; }
.zoom { display: flex; align-items: center; height: 20px; padding: 0 5px; background: linear-gradient(#b4d0f6, #8fb5ea 30%, #739fdf 32%, #a5c6f2); border-left: 1px solid #6f93c4; }
.views { display: flex; height: 18px; border: 1px solid #7392bf; border-radius: 2px; background: #b8cfee; margin-right: 7px; }
.views button { width: 18px; display: flex; align-items: center; justify-content: center; }
.views .on { background: linear-gradient(#fcd08b, #fdc24c); }
.zoom label { width: 34px; line-height: 18px; height: 20px; }
.round { display: flex; }
.zoom input { appearance: none; width: 102px; height: 16px; background: linear-gradient(#e4edf9, #e4edf9) center / 100% 1px no-repeat, linear-gradient(#e4edf9, #e4edf9) center / 1px 9px no-repeat; }
.zoom input::-webkit-slider-thumb { appearance: none; width: 10px; height: 13px; background: #e4ecf8; border: 1px solid #4c648e; border-radius: 1px 1px 5px 5px; }

/* task bar */
.taskbar { height: 39px; flex: none; display: flex; align-items: stretch; background: linear-gradient(to right, #7f93ac, #a5bedb 60px); border-top: 1px solid #d2deec; overflow: hidden; }
.start { width: 55px; padding-left: 8px; }
.start svg { display: block; }
.task { display: flex; align-items: center; justify-content: center; height: 38px; border: 1px solid #3f4f66; border-radius: 3px; background: linear-gradient(135deg, #d9e3ef, #a9bed8); box-shadow: inset 0 0 0 1px #dfe8f3; position: relative; }
.ie { width: 55px; margin: 0 8px 0 4px; }
.ex { width: 59px; }
.xl { width: 55px; background: linear-gradient(135deg, #f4f7fb, #c9d7e8); }
.plain { width: 64px; border: 0; background: none; box-shadow: none; }
.multi::after { content: ""; position: absolute; left: 100%; top: -1px; width: 5px; height: 38px; border: 1px solid #3f4f66; border-left: 0; border-radius: 0 3px 3px 0; background: #c0cfe2; }
.tray { margin-left: auto; display: flex; align-items: center; gap: 6px; padding-left: 36px; color: #fff; background: linear-gradient(to right, #a5bedb, #7f93ab 32px); }
.ime { font-size: 18px; line-height: 20px; height: 26px; margin: 0 6px 0 -3px; }
.up { margin-right: 5px; }
.clock { width: 86px; text-align: center; line-height: 17px; margin-left: 4px; font-family: "Noto Sans", "Noto Sans CJK KR", sans-serif; font-size: 12px; }
.desk { width: 15px; height: 38px; margin-left: -4px; border: 1px solid #4a586c; background: linear-gradient(135deg, #93a2b6, #55657c); }
```
